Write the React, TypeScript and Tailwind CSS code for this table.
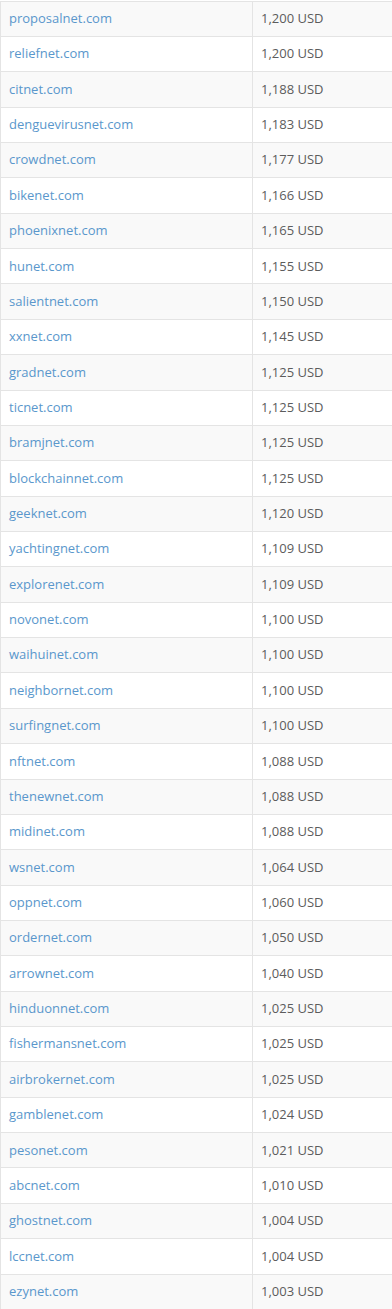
const rows: [string, string][] = [
  ["proposalnet.com", "1,200"],
  ["reliefnet.com", "1,200"],
  ["citnet.com", "1,188"],
  ["denguevirusnet.com", "1,183"],
  ["crowdnet.com", "1,177"],
  ["bikenet.com", "1,166"],
  ["phoenixnet.com", "1,165"],
  ["hunet.com", "1,155"],
  ["salientnet.com", "1,150"],
  ["xxnet.com", "1,145"],
  ["gradnet.com", "1,125"],
  ["ticnet.com", "1,125"],
  ["bramjnet.com", "1,125"],
  ["blockchainnet.com", "1,125"],
  ["geeknet.com", "1,120"],
  ["yachtingnet.com", "1,109"],
  ["explorenet.com", "1,109"],
  ["novonet.com", "1,100"],
  ["waihuinet.com", "1,100"],
  ["neighbornet.com", "1,100"],
  ["surfingnet.com", "1,100"],
  ["nftnet.com", "1,088"],
  ["thenewnet.com", "1,088"],
  ["midinet.com", "1,088"],
  ["wsnet.com", "1,064"],
  ["oppnet.com", "1,060"],
  ["ordernet.com", "1,050"],
  ["arrownet.com", "1,040"],
  ["hinduonnet.com", "1,025"],
  ["fishermansnet.com", "1,025"],
  ["airbrokernet.com", "1,025"],
  ["gamblenet.com", "1,024"],
  ["pesonet.com", "1,021"],
  ["abcnet.com", "1,010"],
  ["ghostnet.com", "1,004"],
  ["lccnet.com", "1,004"],
  ["ezynet.com", "1,003"],
];

export default function App() {
  return (
    <div
      className="w-[392px] bg-white pt-[0.6px]"
      style={{ fontFamily: '"Open Sans", sans-serif' }}
    >
      <div className="border-l border-[#e4e4e4]">
        {rows.map(([d, p], i) => (
          <div
            key={d}
            className={`flex h-[35.37px] border-t border-[#e4e4e4] text-[13px] ${
              i % 2 === 0 ? "bg-[#f9f9f9]" : "bg-white"
            }`}
          >
            <div className="flex w-[252px] items-center border-r border-[#e4e4e4] pl-[8px] text-[#5a97cc]">
              {d}
            </div>
            <div className="flex flex-1 items-center pl-[8px] text-[#5c5c5c]">
              {p} USD
            </div>
          </div>
        ))}
      </div>
    </div>
  );
}
